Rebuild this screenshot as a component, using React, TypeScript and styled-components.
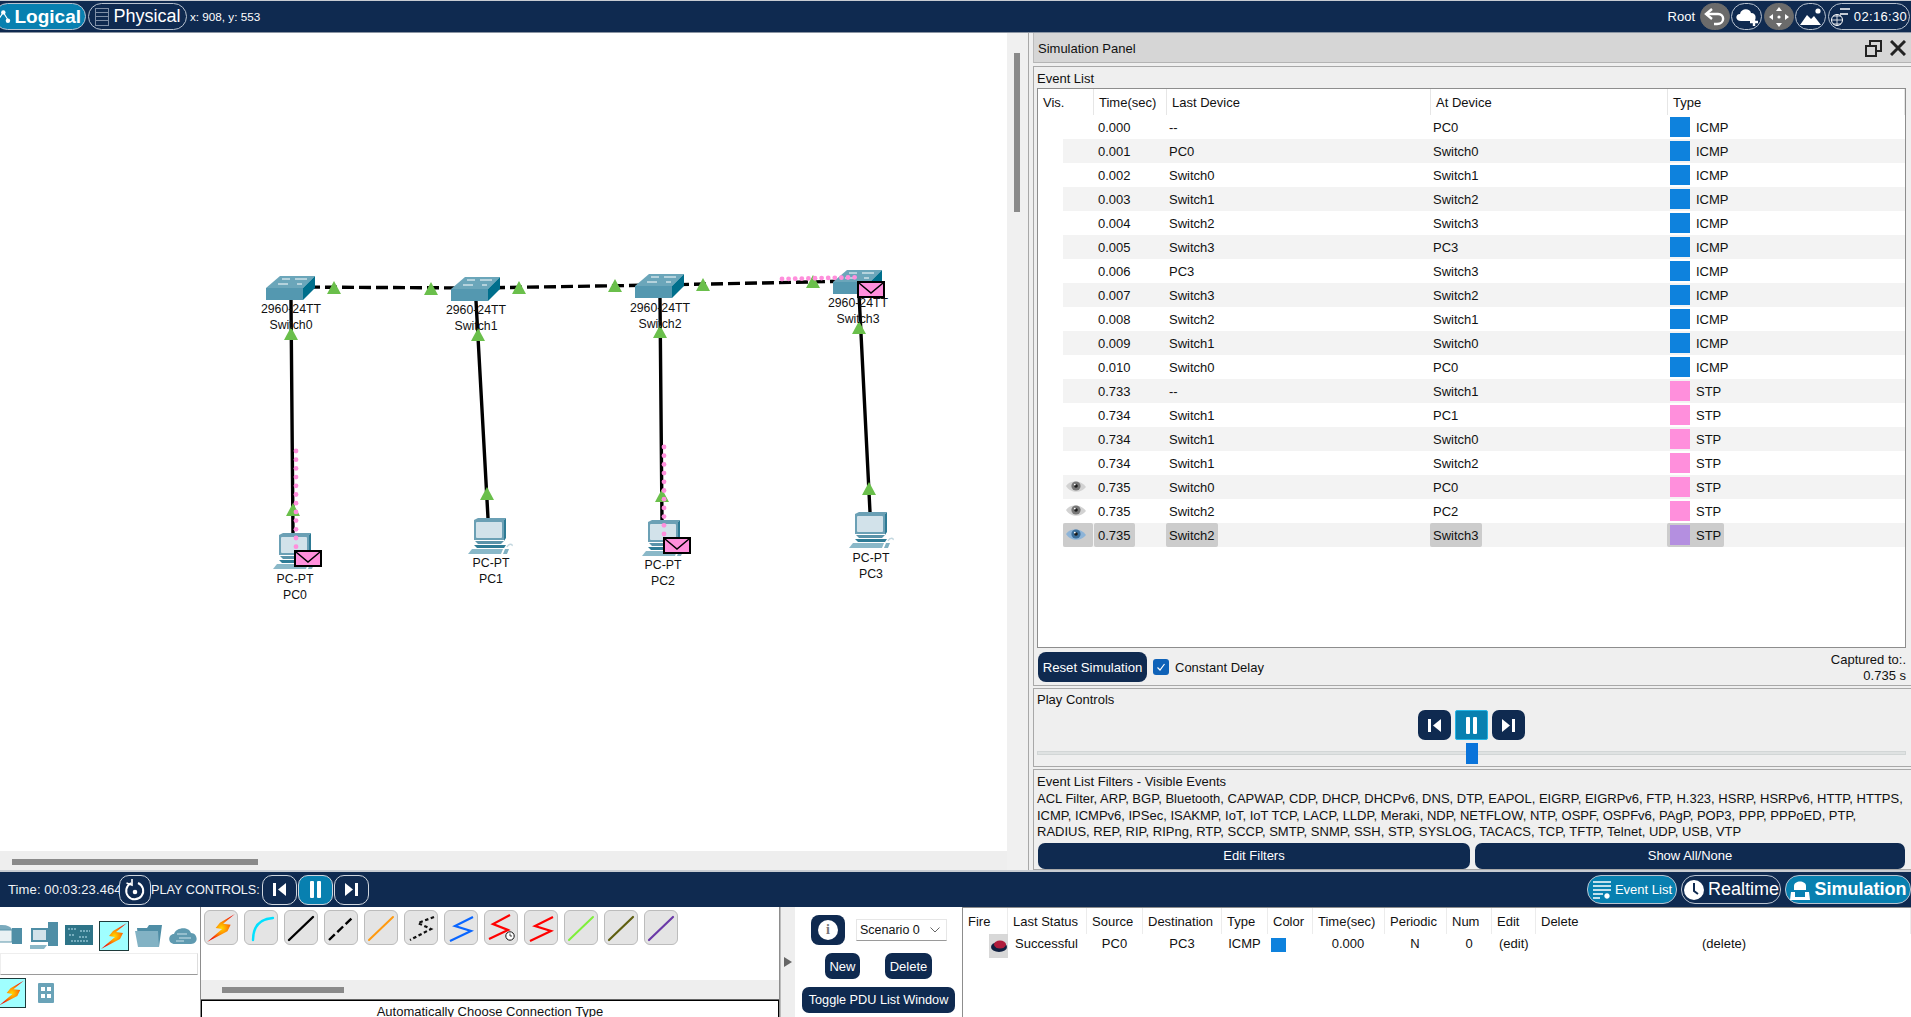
import React from 'react';
import styled, { createGlobalStyle } from 'styled-components';

const NAVY = '#0f2a50';
const BLUE = '#0880b0';

const GlobalStyle = createGlobalStyle`
    html, body { margin: 0; padding: 0; background: #fff; }
    * { box-sizing: border-box; }
    body { font-family: "Liberation Sans", Arial, sans-serif; color: #111; }
`;

const Page = styled.div`
    width: 1911px;
    height: 1017px;
    overflow: hidden;
    display: grid;
    grid-template-rows: 33px 837px 37px 110px;
`;

/* ---------- top bar ---------- */
const TopBar = styled.div`
    background: ${NAVY};
    border-top: 1px solid #c8ccd2;
    border-bottom: 1px solid #8b95a3;
    display: flex;
    align-items: center;
    color: #fff;
    padding-right: 1px;
`;

const Pill = styled.div<{ $active?: boolean; $w: number; $size?: number; $bold?: boolean; $grey?: boolean; $ml?: number }>`
    width: ${p => p.$w}px;
    height: 27px;
    margin-left: ${p => p.$ml ?? 0}px;
    flex: none;
    display: flex;
    align-items: center;
    justify-content: center;
    gap: 3px;
    border-radius: 14px;
    border: 1px solid ${p => (p.$grey ? '#6b6b6b' : '#b9c3d0')};
    background: ${p => (p.$grey ? '#6b6b6b' : p.$active ? BLUE : NAVY)};
    color: #fff;
    font-size: ${p => p.$size ?? 13}px;
    font-weight: ${p => (p.$bold ? 700 : 400)};
    white-space: nowrap;
`;

const LogicalPill = styled(Pill)`
    gap: 1px;
    padding-right: 4px;
`;

const Coords = styled.span`
    font-size: 11.7px;
    margin-left: 3px;
`;

const Spacer = styled.div`
    flex: 1;
`;

const RootLabel = styled.span`
    font-size: 13px;
    margin-right: 5px;
`;

const Clock = styled.span`
    font-size: 13px;
    letter-spacing: 0.35px;
`;

/* ---------- work area ---------- */
const Work = styled.div`
    display: grid;
    grid-template-columns: 1029px 882px;
    min-height: 0;
`;

const Canvas = styled.div`
    position: relative;
    background: #fff;
    overflow: hidden;
    border-right: 1px solid #a8a8a8;
`;

const LinkLayer = styled.svg`
    position: absolute;
    left: 0;
    top: -33px;
    width: 1030px;
    height: 870px;
`;

const VTrack = styled.div`
    position: absolute;
    top: 0;
    right: 0;
    bottom: 0;
    width: 21px;
    background: #f0f0f0;
`;

const VThumb = styled.div`
    position: absolute;
    top: 20px;
    left: 7px;
    width: 6px;
    height: 159px;
    background: #8a8a8a;
`;

const HTrack = styled.div`
    position: absolute;
    left: 0;
    right: 21px;
    bottom: 0;
    height: 19px;
    background: #eeeeee;
`;

const HThumb = styled.div`
    position: absolute;
    left: 12px;
    top: 8px;
    width: 246px;
    height: 6px;
    background: #8a8a8a;
`;

const NodeIcon = styled.svg<{ $x: number; $y: number }>`
    position: absolute;
    left: ${p => p.$x}px;
    top: ${p => p.$y - 33}px;
`;

const NodeLabel = styled.div<{ $cx: number; $y: number }>`
    position: absolute;
    left: ${p => p.$cx - 50}px;
    top: ${p => p.$y - 33 - 8}px;
    width: 100px;
    text-align: center;
    font-size: 12.3px;
    line-height: 16px;
`;

/* ---------- simulation panel ---------- */
const Panel = styled.div`
    background: #efefef;
    display: flex;
    flex-direction: column;
    min-height: 0;
    padding-left: 4px;
    font-size: 13px;
`;

const PanelHead = styled.div`
    height: 30px;
    flex: none;
    margin-bottom: 1px;
    background: #d6d6d6;
    border-bottom: 1px solid #b4b4b4;
    border-left: 1px solid #bbb;
    display: flex;
    align-items: center;
    justify-content: space-between;
    padding: 1px 5px 0 4px;
`;

const HeadIcons = styled.div`
    display: flex;
    align-items: center;
    gap: 8px;
`;

const Section = styled.div<{ $h: number }>`
    height: ${p => p.$h}px;
    flex: none;
    margin-top: 2px;
    border: 1px solid #a8a8a8;
    border-right: none;
    padding: 0 5px 0 3px;
    position: relative;
    background: #efefef;
`;

const SectionTitle = styled.div`
    height: 21px;
    line-height: 23px;
`;

const TableBox = styled.div`
    height: 560px;
    background: #fff;
    border: 1px solid #8d8d8d;
    overflow: hidden;
`;

const HeadRow = styled.div`
    height: 26px;
    display: grid;
    grid-template-columns: 56px 73px 264px 237px 1fr;
    align-items: stretch;
    font-size: 13px;
`;

const HeadCell = styled.div`
    display: flex;
    align-items: center;
    padding-left: 5px;
    border-right: 1px solid #e6e6e6;
`;

const EventRow = styled.div<{ $alt: boolean }>`
    height: 24px;
    display: grid;
    grid-template-columns: 25px 31px 72px 264px 237px 1fr;
    background: linear-gradient(to right, #fff 25px, ${p => (p.$alt ? '#f3f3f3' : '#fff')} 25px);
    align-items: stretch;
`;

const Cell = styled.div<{ $sel?: boolean }>`
    justify-self: start;
    display: flex;
    align-items: center;
    gap: 6px;
    height: 24px;
    padding: 0 3px;
    border-radius: 2px;
    background: ${p => (p.$sel ? '#cccccc' : 'transparent')};
`;

const EyeCell = styled(Cell)`
    justify-self: stretch;
    margin-right: 1px;
`;

const TimeCell = styled(Cell)`
    padding: 0 4px;
`;

const Swatch = styled.span<{ $c: string }>`
    width: 20px;
    height: 20px;
    background: ${p => p.$c};
    flex: none;
`;

const ResetRow = styled.div`
    display: flex;
    align-items: center;
    height: 38px;
    padding-left: 1px;
`;

const NavyButton = styled.div<{ $w?: number; $h?: number; $r?: number; $size?: number }>`
    width: ${p => (p.$w ? `${p.$w}px` : 'auto')};
    height: ${p => p.$h ?? 26}px;
    flex: none;
    border-radius: ${p => p.$r ?? 7}px;
    background: ${NAVY};
    color: #fff;
    display: flex;
    align-items: center;
    justify-content: center;
    font-size: ${p => p.$size ?? 13}px;
    white-space: nowrap;
`;

const Check = styled.div`
    width: 16px;
    height: 16px;
    margin: 0 6px;
    border-radius: 3px;
    background: #0f62b8;
    display: flex;
    align-items: center;
    justify-content: center;
`;

const Captured = styled.div`
    margin-left: auto;
    text-align: right;
    line-height: 16px;
    margin-top: 2px;
`;

const PlayTitle = styled.div`
    line-height: 20px;
    padding-top: 1px;
`;

const PlayButtons = styled.div`
    display: flex;
    justify-content: center;
    gap: 4px;
`;

const SquareButton = styled.div<{ $on?: boolean }>`
    width: 33px;
    height: 30px;
    border-radius: ${p => (p.$on ? 2 : 7)}px;
    background: ${p => (p.$on ? BLUE : NAVY)};
    border: ${p => (p.$on ? '1px solid #25b4e4' : 'none')};
    display: flex;
    align-items: center;
    justify-content: center;
`;

const SliderTrack = styled.div`
    height: 4px;
    margin-top: 11px;
    background: #dfe2e2;
    border: 1px solid #d2d6d6;
    position: relative;
`;

const SliderThumb = styled.div`
    position: absolute;
    left: 428px;
    top: -9px;
    width: 12px;
    height: 21px;
    background: #0a74da;
`;

const FilterTitle = styled.div`
    line-height: 18px;
    padding-top: 3px;
`;

const FilterLine = styled.div`
    line-height: 16.5px;
    white-space: nowrap;
    font-size: 13px;
`;

const FilterButtons = styled.div`
    display: grid;
    grid-template-columns: 432px 430px;
    gap: 5px;
    margin: 2px 0 0 1px;
`;

/* ---------- time bar ---------- */
const TimeBar = styled.div`
    background: ${NAVY};
    border-top: 2px solid #c8ccd2;
    color: #f2f4f7;
    display: flex;
    align-items: center;
    font-size: 13px;
    padding-left: 8px;
`;

const TimeText = styled.span`
    width: 111px;
    flex: none;
    white-space: nowrap;
    letter-spacing: 0.12px;
`;

const RoundBtn = styled.div<{ $w: number; $on?: boolean; $ml?: number }>`
    width: ${p => p.$w}px;
    height: 30px;
    margin-left: ${p => p.$ml ?? 0}px;
    flex: none;
    border: 1px solid #cfd6de;
    border-radius: 10px;
    background: ${p => (p.$on ? BLUE : NAVY)};
    display: flex;
    align-items: center;
    justify-content: center;
`;

const PlayLabel = styled.span`
    width: 111px;
    flex: none;
    font-size: 12.7px;
    white-space: nowrap;
`;

const ModeGroup = styled.div`
    margin-left: auto;
    display: flex;
    gap: 4px;
    color: #fff;
`;

const ModePill = styled(Pill)`
    height: 29px;
`;

/* ---------- bottom dock ---------- */
const Dock = styled.div`
    display: grid;
    grid-template-columns: 201px 579px 20px 162px 1fr;
    background: #fff;
    min-height: 0;
    font-size: 13px;
`;

const DeviceBox = styled.div`
    position: relative;
    overflow: hidden;
    border-right: 1px solid #8d8d8d;
    display: flex;
    flex-direction: column;
`;

const DeviceRow = styled.div`
    height: 46px;
    display: flex;
    align-items: center;
    gap: 6px;
    margin-left: -6px;
    padding-top: 12px;
`;

const SearchBox = styled.div`
    height: 22px;
    width: 198px;
    border: 1px solid #eee;
    border-bottom: 1px solid #9a9a9a;
    border-right: 1px solid #ddd;
`;

const SubRow = styled.div`
    display: flex;
    align-items: center;
    gap: 12px;
    margin-top: 3px;
    margin-left: -3px;
`;

const Hilite = styled.div<{ $w?: number }>`
    width: ${p => p.$w ?? 30}px;
    height: 30px;
    flex: none;
    background: #a0ffff;
    border: 1px solid #1d3b3b;
    display: flex;
    align-items: center;
    justify-content: center;
`;

const ConnBox = styled.div`
    display: flex;
    flex-direction: column;
    border-right: 1px solid #8d8d8d;
    min-height: 0;
`;

const TileRow = styled.div`
    height: 73px;
    flex: none;
    display: flex;
    gap: 6px;
    padding: 3px 0 0 3px;
`;

const Tile = styled.div`
    width: 34px;
    height: 35px;
    background: #e4e4e4;
    border: 1px solid #bcbcbc;
    border-radius: 6px;
    display: flex;
    align-items: center;
    justify-content: center;
    flex: none;
`;

const ConnScroll = styled.div`
    height: 20px;
    flex: none;
    background: #eeeeee;
    position: relative;
    border-bottom: 1px solid #666;
`;

const ConnThumb = styled.div`
    position: absolute;
    left: 21px;
    top: 7px;
    width: 122px;
    height: 6px;
    background: #8a8a8a;
`;

const ConnCaption = styled.div`
    border: 1px solid #000;
    border-bottom: none;
    text-align: center;
    font-size: 13px;
    line-height: 22px;
    height: 30px;
`;

const Strip = styled.div`
    background: #eeeeee;
    border-left: 1px solid #bbb;
    margin-right: 5px;
    display: flex;
    align-items: center;
    padding-left: 3px;
`;

const Arrow = styled.div`
    width: 0;
    height: 0;
    border-left: 8px solid #666;
    border-top: 5px solid transparent;
    border-bottom: 5px solid transparent;
`;

const ScenarioBox = styled.div`
    display: flex;
    flex-direction: column;
    align-items: flex-start;
    padding: 8px 0 0 2px;
`;

const ScenarioTop = styled.div`
    display: flex;
    align-items: center;
    gap: 11px;
    height: 30px;
    margin-left: 9px;
`;

const InfoDot = styled.div`
    width: 20px;
    height: 20px;
    border-radius: 50%;
    background: #fff;
    color: #777;
    font: 700 14px/20px "Liberation Serif", serif;
    text-align: center;
`;

const Select = styled.div`
    width: 91px;
    height: 22px;
    background: #fff;
    border: 1px solid #e6e6e6;
    border-bottom: 1px solid #9a9a9a;
    display: flex;
    align-items: center;
    justify-content: space-between;
    padding: 0 6px 0 3px;
    font-size: 12.5px;
`;

const ScenarioBtns = styled.div`
    display: flex;
    gap: 25px;
    margin: 8px 0 0 23px;
`;

const ToggleWrap = styled.div`
    margin-top: 8px;
    width: 153px;
`;

const PduTable = styled.div`
    border-left: 1px solid #8d8d8d;
    border-top: 1px solid #8d8d8d;
    position: relative;
`;

const PduHead = styled.div`
    height: 26px;
    display: grid;
    grid-template-columns: 45px 79px 56px 79px 46px 45px 72px 62px 45px 44px 1fr;
    font-size: 13px;
`;

const PduHeadCell = styled.div`
    display: flex;
    align-items: center;
    padding-left: 5px;
    border-right: 1px solid #ececec;
`;

const PduRow = styled.div`
    height: 24px;
    display: grid;
    grid-template-columns: 45px 79px 55px 80px 45px 45px 72px 62px 46px 203px 1fr;
    font-size: 13px;
    align-items: center;
    margin-top: -3px;
`;

const PduCell = styled.div<{ $center?: boolean }>`
    text-align: ${p => (p.$center ? 'center' : 'left')};
    padding-left: ${p => (p.$center ? 0 : 7)}px;
`;

const FireBtn = styled.div`
    position: absolute;
    left: 26px;
    top: 26px;
    width: 19px;
    height: 24px;
    background: #d8d8d8;
    display: flex;
    align-items: center;
    justify-content: center;
`;

const ColorDot = styled.div`
    width: 15px;
    height: 14px;
    margin: 3px 0 0 4px;
    background: #0e82dd;
`;

/* ---------- drawings ---------- */
function Bolt({ id, size = 28 }: { id: string; size?: number }) {
    return (
        <svg width={size} height={size} viewBox="0 0 28 28">
            <defs>
                <radialGradient id={id} cx="52%" cy="50%" r="50%">
                    <stop offset="0%" stopColor="#ffd800" />
                    <stop offset="45%" stopColor="#ff8a00" />
                    <stop offset="100%" stopColor="#f01808" />
                </radialGradient>
            </defs>
            <path d="M27 1 L13 9 L9 14 L15 15 L1 27 L20 17 L23 11 L16 10 Z" fill={`url(#${id})`} />
        </svg>
    );
}

function SwitchIcon({ x, y }: { x: number; y: number }) {
    return (
        <NodeIcon $x={x} $y={y} width={49} height={24} viewBox="0 0 49 24">
            <path d="M0 12 L14 0 H49 L37 12 Z" fill="#6ba6ba" />
            <path d="M0 12 H37 V24 H0 Z" fill="#5498b0" />
            <path d="M37 12 L49 0 V12 L37 24 Z" fill="#006f8c" />
            <path d="M16 3 H24 M29 3 H41 M12 8 H22 M31 8 H36" stroke="#fff" strokeWidth="1" fill="none" />
        </NodeIcon>
    );
}

function PcIcon({ x, y }: { x: number; y: number }) {
    return (
        <NodeIcon $x={x} $y={y} width={45} height={36} viewBox="0 0 45 36">
            <path d="M6 2 L10 0 H38 L36 2 V22 H6 Z" fill="#6ba0b5" />
            <path d="M36 2 L38 0 V20 L36 23 Z" fill="#2d7a94" />
            <rect x="8" y="4" width="26" height="16" rx="1" fill="#d2e2ea" />
            <path d="M7 23 H36 L33 26 H10 Z" fill="#5a93a9" />
            <path d="M6 27 H38 L36 30 H9 Z" fill="#2f7c96" />
            <path d="M4 31 H35 L33 36 H0 Z" fill="#8ab8c8" />
            <path d="M37 31 H41 L39 36 H35 Z" fill="#7fb0c2" />
            <path d="M39 29 C41 25 45 26 44 28" stroke="#c4d8e0" strokeWidth="1.4" fill="none" />
        </NodeIcon>
    );
}

function Envelope({ x, y }: { x: number; y: number }) {
    return (
        <NodeIcon $x={x} $y={y} width={28} height={17} viewBox="0 0 28 17">
            <rect x="1" y="1" width="26" height="15" fill="#ff8fdc" stroke="#000" strokeWidth="2" />
            <path d="M2 2 L14 12 L26 2" fill="none" stroke="#000" strokeWidth="1.5" />
        </NodeIcon>
    );
}

function Eye({ blue }: { blue?: boolean }) {
    const c = blue ? '#8db4d8' : '#d2d2d2';
    const d = blue ? '#3c6f9c' : '#777777';
    return (
        <svg width="20" height="14" viewBox="0 0 20 14">
            <path d="M0 6 C4 0 15 0 20 7 C15 14 4 13 0 6 Z" fill={c} />
            <circle cx="10" cy="6" r="4.6" fill={d} />
            <circle cx="10" cy="6" r="1.8" fill="#1a1a1a" />
            <circle cx="8.8" cy="4.6" r="0.9" fill="#fff" />
        </svg>
    );
}

const Prev = () => (
    <svg width="15" height="15" viewBox="0 0 15 15" fill="#fff"><rect x="1" y="1" width="3" height="13" /><path d="M14 1 V14 L6 7.5 Z" /></svg>
);
const Next = () => (
    <svg width="15" height="15" viewBox="0 0 15 15" fill="#fff"><rect x="11" y="1" width="3" height="13" /><path d="M1 1 V14 L9 7.5 Z" /></svg>
);
const Pause = () => (
    <svg width="15" height="17" viewBox="0 0 15 17" fill="#fff"><rect x="2" y="0" width="4" height="17" rx="1" /><rect x="9" y="0" width="4" height="17" rx="1" /></svg>
);

/* ---------- data ---------- */
const ICMP = '#0e82dd';
const STP = '#ff8fdc';
const events: [string, string, string, string][] = [
    ['0.000', '--', 'PC0', ICMP],
    ['0.001', 'PC0', 'Switch0', ICMP],
    ['0.002', 'Switch0', 'Switch1', ICMP],
    ['0.003', 'Switch1', 'Switch2', ICMP],
    ['0.004', 'Switch2', 'Switch3', ICMP],
    ['0.005', 'Switch3', 'PC3', ICMP],
    ['0.006', 'PC3', 'Switch3', ICMP],
    ['0.007', 'Switch3', 'Switch2', ICMP],
    ['0.008', 'Switch2', 'Switch1', ICMP],
    ['0.009', 'Switch1', 'Switch0', ICMP],
    ['0.010', 'Switch0', 'PC0', ICMP],
    ['0.733', '--', 'Switch1', STP],
    ['0.734', 'Switch1', 'PC1', STP],
    ['0.734', 'Switch1', 'Switch0', STP],
    ['0.734', 'Switch1', 'Switch2', STP],
    ['0.735', 'Switch0', 'PC0', STP],
    ['0.735', 'Switch2', 'PC2', STP],
    ['0.735', 'Switch2', 'Switch3', '#b48fe0'],
];

const switches = [
    { x: 266, y: 276, cx: 291, ly: 309, name: 'Switch0' },
    { x: 451, y: 277, cx: 476, ly: 310, name: 'Switch1' },
    { x: 635, y: 274, cx: 660, ly: 308, name: 'Switch2' },
    { x: 833, y: 270, cx: 858, ly: 303, name: 'Switch3' },
];

const pcs = [
    { x: 273, y: 533, cx: 295, ly: 579, name: 'PC0' },
    { x: 468, y: 518, cx: 491, ly: 563, name: 'PC1' },
    { x: 642, y: 520, cx: 663, ly: 565, name: 'PC2' },
    { x: 849, y: 512, cx: 871, ly: 558, name: 'PC3' },
];

const triangles = [
    [334, 281], [431, 282], [519, 281], [615, 279], [703, 278], [813, 275],
    [291, 327], [478, 328], [660, 325], [859, 321],
    [293, 503], [487, 487], [662, 489], [869, 482],
];

const dots: [number, number][] = [
    ...Array.from({ length: 12 }, (_, i): [number, number] => [296, 451 + i * 8.7]),
    ...Array.from({ length: 11 }, (_, i): [number, number] => [664, 447 + i * 8.7]),
    ...Array.from({ length: 12 }, (_, i): [number, number] => [782 + i * 6.6, 279 - i * 0.15]),
];

const tiles: React.ReactNode[] = [
    <Bolt id="tile-bolt" size={30} />,
    <svg width="28" height="28" viewBox="0 0 28 28"><path d="M6 26 C6 12 13 5 26 4" fill="none" stroke="#00e1ff" strokeWidth="2.4" strokeLinecap="round" /></svg>,
    <svg width="28" height="28" viewBox="0 0 28 28"><path d="M2 26 L26 3" stroke="#000" strokeWidth="2.4" strokeLinecap="round" /></svg>,
    <svg width="28" height="28" viewBox="0 0 28 28"><path d="M2 26 L26 3" stroke="#000" strokeWidth="2.4" strokeDasharray="8 3.5" /></svg>,
    <svg width="28" height="28" viewBox="0 0 28 28"><path d="M2 26 L26 3" stroke="#ff9a10" strokeWidth="2" strokeLinecap="round" /></svg>,
    <svg width="28" height="28" viewBox="0 0 28 28"><path d="M27 3 L11 9 L24 15 L3 26" fill="none" stroke="#111" strokeWidth="2.2" strokeDasharray="3.5 2.5" /></svg>,
    <svg width="28" height="28" viewBox="0 0 28 28"><path d="M26 3 L8 12 L24 17 L3 27" fill="none" stroke="#0a66ff" strokeWidth="2.2" /></svg>,
    <svg width="30" height="30" viewBox="0 0 30 30"><path d="M24 2 L7 11 L22 17 L3 26" fill="none" stroke="#ff0000" strokeWidth="2.2" /><circle cx="24" cy="23" r="4.2" fill="#fff" stroke="#111" strokeWidth="1" /><path d="M24 20.5 V23 H26" stroke="#111" strokeWidth="0.8" fill="none" /></svg>,
    <svg width="28" height="28" viewBox="0 0 28 28"><path d="M26 3 L8 12 L24 17 L3 27" fill="none" stroke="#ff0000" strokeWidth="2.2" /></svg>,
    <svg width="28" height="28" viewBox="0 0 28 28"><path d="M2 26 L26 3" stroke="#7fef3a" strokeWidth="2" strokeLinecap="round" /></svg>,
    <svg width="28" height="28" viewBox="0 0 28 28"><path d="M2 26 L26 3" stroke="#5f5f10" strokeWidth="2.2" strokeLinecap="round" /></svg>,
    <svg width="28" height="28" viewBox="0 0 28 28"><path d="M2 26 L26 3" stroke="#6b3aa8" strokeWidth="2.2" strokeLinecap="round" /></svg>,
];

const filterLines = [
    'ACL Filter, ARP, BGP, Bluetooth, CAPWAP, CDP, DHCP, DHCPv6, DNS, DTP, EAPOL, EIGRP, EIGRPv6, FTP, H.323, HSRP, HSRPv6, HTTP, HTTPS,',
    'ICMP, ICMPv6, IPSec, ISAKMP, IoT, IoT TCP, LACP, LLDP, Meraki, NDP, NETFLOW, NTP, OSPF, OSPFv6, PAgP, POP3, PPP, PPPoED, PTP,',
    'RADIUS, REP, RIP, RIPng, RTP, SCCP, SMTP, SNMP, SSH, STP, SYSLOG, TACACS, TCP, TFTP, Telnet, UDP, USB, VTP',
];

function App() {
    return (
        <Page>
            <GlobalStyle />
            <TopBar>
                <LogicalPill $active $w={92} $size={19} $bold $ml={-6}>
                    <svg width="20" height="20" viewBox="0 0 20 20"><path d="M3 14 L9 5 L14 13" stroke="#fff" strokeWidth="1.2" fill="none" /><circle cx="9" cy="5" r="2.4" fill="#fff" /><circle cx="14" cy="14" r="2.4" fill="#fff" /><circle cx="3" cy="15" r="2.2" fill="#fff" /></svg>
                    Logical
                </LogicalPill>
                <Pill $w={99} $size={18} $ml={2}>
                    <svg width="16" height="20" viewBox="0 0 16 20" fill="none" stroke="#7f8fa6"><rect x="1.5" y="1.5" width="13" height="17" /><path d="M1.5 5.5 H14.5 M1.5 9.5 H14.5 M1.5 13.5 H14.5" /></svg>
                    Physical
                </Pill>
                <Coords>x: 908, y: 553</Coords>
                <Spacer />
                <RootLabel>Root</RootLabel>
                <Pill $grey $w={30}>
                    <svg width="24" height="20" viewBox="0 0 24 20" fill="none" stroke="#fff" strokeWidth="2.4"><path d="M9 2 L3 7 L9 12" /><path d="M3 7 H15 C22 7 22 17 14 17 H11" /></svg>
                </Pill>
                <Pill $w={31} $ml={1}>
                    <svg width="24" height="20" viewBox="0 0 24 20"><path d="M6 14 C0 14 0 7 5 7 C6 1 15 1 16 6 C22 6 22 14 17 14 Z" fill="#fff" /><path d="M19 11 V19 M15 15 H23" stroke="#fff" strokeWidth="2.4" /></svg>
                </Pill>
                <Pill $grey $w={30} $ml={2}>
                    <svg width="22" height="22" viewBox="0 0 22 22" fill="#fff"><path d="M11 1 L14 5 H8 Z M11 21 L8 17 H14 Z M1 11 L5 8 V14 Z M21 11 L17 14 V8 Z" /><circle cx="11" cy="11" r="1.6" /></svg>
                </Pill>
                <Pill $w={31} $ml={1}>
                    <svg width="24" height="20" viewBox="0 0 24 20" fill="#fff"><path d="M1 18 L8 8 L12 12 L15 9 L22 18 Z" /><circle cx="19" cy="4" r="2.6" /></svg>
                </Pill>
                <Pill $w={82} $ml={2}>
                    <svg width="20" height="22" viewBox="0 0 20 22" fill="none" stroke="#fff"><circle cx="6" cy="14" r="5.5" /><path d="M0.5 14 H11.5 M6 8.5 V19.5 M2 10 H10 M2 18 H10" strokeWidth="0.8" /><path d="M9 3 H19 M9 8 H17" strokeWidth="1.6" /></svg>
                    <Clock>02:16:30</Clock>
                </Pill>
            </TopBar>

            <Work>
                <Canvas>
                    <LinkLayer viewBox="0 0 1030 870">
                        <g stroke="#000" strokeWidth="3.4" fill="none">
                            <path d="M291 287 L476 288 M476 288 L660 285 M660 285 L858 281" strokeDasharray="12 5" />
                            <path d="M291 300 L293 535 M476 301 L488 518 M660 298 L662 522 M859 294 L870 512" />
                        </g>
                        {triangles.map(([x, y], i) => (
                            <path key={i} d={`M${x} ${y} L${x + 7} ${y + 13} H${x - 7} Z`} fill="#6abf4b" />
                        ))}
                    </LinkLayer>
                    {switches.map(s => (
                        <React.Fragment key={s.name}>
                            <SwitchIcon x={s.x} y={s.y} />
                            <NodeLabel $cx={s.cx} $y={s.ly}>2960-24TT<br />{s.name}</NodeLabel>
                        </React.Fragment>
                    ))}
                    {pcs.map(p => (
                        <React.Fragment key={p.name}>
                            <PcIcon x={p.x} y={p.y} />
                            <NodeLabel $cx={p.cx} $y={p.ly}>PC-PT<br />{p.name}</NodeLabel>
                        </React.Fragment>
                    ))}
                    <LinkLayer viewBox="0 0 1030 870">
                        {dots.map(([x, y], i) => (
                            <circle key={i} cx={x} cy={y} r="2.4" fill="#ff8fdc" />
                        ))}
                    </LinkLayer>
                    <Envelope x={294} y={550} />
                    <Envelope x={663} y={537} />
                    <Envelope x={857} y={281} />
                    <VTrack><VThumb /></VTrack>
                    <HTrack><HThumb /></HTrack>
                </Canvas>

                <Panel>
                    <PanelHead>
                        <span>Simulation Panel</span>
                        <HeadIcons>
                            <svg width="17" height="17" viewBox="0 0 17 17" fill="none" stroke="#222" strokeWidth="2"><rect x="1" y="6" width="10" height="10" /><path d="M5 5 V1 H16 V11 H12" /></svg>
                            <svg width="16" height="16" viewBox="0 0 16 16" stroke="#222" strokeWidth="3"><path d="M1 1 L15 15 M15 1 L1 15" /></svg>
                        </HeadIcons>
                    </PanelHead>
                    <Section $h={620}>
                        <SectionTitle>Event List</SectionTitle>
                        <TableBox>
                            <HeadRow>
                                <HeadCell>Vis.</HeadCell>
                                <HeadCell>Time(sec)</HeadCell>
                                <HeadCell>Last Device</HeadCell>
                                <HeadCell>At Device</HeadCell>
                                <HeadCell>Type</HeadCell>
                            </HeadRow>
                            {events.map(([t, from, at, c], i) => {
                                const last = i === events.length - 1;
                                return (
                                    <EventRow key={i} $alt={i % 2 === 1}>
                                        <span />
                                        <EyeCell $sel={last}>{i >= 15 && <Eye blue={last} />}</EyeCell>
                                        <TimeCell $sel={last}>{t}</TimeCell>
                                        <Cell $sel={last}>{from}</Cell>
                                        <Cell $sel={last}>{at}</Cell>
                                        <Cell $sel={last}>
                                            <Swatch $c={c} />
                                            {c === ICMP ? 'ICMP' : 'STP'}
                                        </Cell>
                                    </EventRow>
                                );
                            })}
                        </TableBox>
                        <ResetRow>
                            <NavyButton $w={109} $h={30} $r={8} $size={13.2}>Reset Simulation</NavyButton>
                            <Check>
                                <svg width="10" height="10" viewBox="0 0 10 10" fill="none" stroke="#fff" strokeWidth="1.2"><path d="M1.5 5.5 L4 8 L8.5 2" /></svg>
                            </Check>
                            <span>Constant Delay</span>
                            <Captured>Captured to:.<br />0.735 s</Captured>
                        </ResetRow>
                    </Section>
                    <Section $h={79}>
                        <PlayTitle>Play Controls</PlayTitle>
                        <PlayButtons>
                            <SquareButton><Prev /></SquareButton>
                            <SquareButton $on><Pause /></SquareButton>
                            <SquareButton><Next /></SquareButton>
                        </PlayButtons>
                        <SliderTrack><SliderThumb /></SliderTrack>
                    </Section>
                    <Section $h={101}>
                        <FilterTitle>Event List Filters - Visible Events</FilterTitle>
                        {filterLines.map(line => <FilterLine key={line}>{line}</FilterLine>)}
                        <FilterButtons>
                            <NavyButton $r={7}>Edit Filters</NavyButton>
                            <NavyButton $r={7}>Show All/None</NavyButton>
                        </FilterButtons>
                    </Section>
                </Panel>
            </Work>

            <TimeBar>
                <TimeText>Time: 00:03:23.464</TimeText>
                <RoundBtn $w={32}>
                    <svg width="22" height="24" viewBox="0 0 22 24" fill="none" stroke="#fff" strokeWidth="2"><path d="M14 5 A8.5 8.5 0 1 1 7 5.2" /><path d="M8 1 L8 7 L2.5 5" strokeWidth="1.6" /><circle cx="11" cy="14" r="1.3" fill="#fff" /></svg>
                </RoundBtn>
                <PlayLabel>PLAY CONTROLS:</PlayLabel>
                <RoundBtn $w={35}><Prev /></RoundBtn>
                <RoundBtn $w={35} $on $ml={1}><Pause /></RoundBtn>
                <RoundBtn $w={35} $ml={1}><Next /></RoundBtn>
                <ModeGroup>
                    <ModePill $active $w={90}>
                        <svg width="20" height="22" viewBox="0 0 20 22" stroke="#fff" strokeWidth="1.6"><path d="M1 3 H19 M1 7 H19 M1 11 H19 M1 15 H11 M1 19 H8" /><circle cx="15" cy="17" r="2.4" fill="#fff" strokeWidth="0.6" /></svg>
                        Event List
                    </ModePill>
                    <ModePill $w={100} $size={18}>
                        <svg width="22" height="22" viewBox="0 0 22 22"><circle cx="11" cy="11" r="10" fill="#fff" /><path d="M11 4 V12 L15 15" stroke={NAVY} strokeWidth="2" fill="none" /></svg>
                        Realtime
                    </ModePill>
                    <ModePill $active $w={126} $size={18} $bold>
                        <svg width="22" height="24" viewBox="0 0 22 24" fill="#fff"><path d="M5 8 C5 2 17 2 17 8 V12 H5 Z" /><path d="M2 14 H20 L21 22 H1 Z" /><rect x="6" y="13" width="10" height="6" fill={BLUE} /></svg>
                        Simulation
                    </ModePill>
                </ModeGroup>
            </TimeBar>

            <Dock>
                <DeviceBox>
                    <DeviceRow>
                        <svg width="30" height="30" viewBox="0 0 30 30"><ellipse cx="8" cy="9" rx="10" ry="5" fill="#7aaabd" /><rect x="-2" y="9" width="20" height="12" fill="#e9f1f4" stroke="#5d96ab" /><rect x="18" y="7" width="10" height="16" fill="#4f8ea6" /></svg>
                        <svg width="29" height="30" viewBox="0 0 29 30"><rect x="18" y="1" width="10" height="24" fill="#4f8ea6" /><rect x="2" y="8" width="15" height="12" fill="#d2e2ea" stroke="#4f8ea6" strokeWidth="2" /><path d="M0 24 H17 L14 28 H0 Z" fill="#8ab8c8" /></svg>
                        <svg width="28" height="22" viewBox="0 0 28 22"><rect width="28" height="20" fill="#2e7488" /><path d="M3 4 H12 M15 6 H25 M4 10 H9 M14 12 H22 M6 16 H24" stroke="#8fc0cf" strokeWidth="1.5" strokeDasharray="2 1" /></svg>
                        <Hilite $w={30}><Bolt id="dev-bolt" /></Hilite>
                        <svg width="28" height="24" viewBox="0 0 28 24"><path d="M2 4 H12 L14 1 H27 L24 23 H4 Z" fill="#4f8ea6" /><path d="M0 7 H23 L24 23 H3 Z" fill="#82b2c4" /></svg>
                        <svg width="28" height="20" viewBox="0 0 28 20"><path d="M6 18 C-2 18 -1 8 5 8 C7 1 20 0 22 7 C29 7 30 18 22 18 Z" fill="#5f9ab0" /><path d="M8 8 H18 M10 12 H22 M7 15 H15" stroke="#a8cad6" strokeWidth="1.3" /></svg>
                    </DeviceRow>
                    <SearchBox />
                    <SubRow>
                        <Hilite $w={29}><Bolt id="sub-bolt" /></Hilite>
                        <svg width="16" height="20" viewBox="0 0 16 20"><rect width="16" height="20" rx="1" fill="#6aa3b8" /><rect x="3" y="4" width="4" height="4" fill="#fff" /><rect x="9" y="4" width="4" height="4" fill="#fff" /><rect x="3" y="11" width="4" height="4" fill="#fff" /><rect x="9" y="11" width="4" height="4" fill="#fff" /></svg>
                    </SubRow>
                </DeviceBox>
                <ConnBox>
                    <TileRow>
                        {tiles.map((t, i) => <Tile key={i}>{t}</Tile>)}
                    </TileRow>
                    <ConnScroll><ConnThumb /></ConnScroll>
                    <ConnCaption>Automatically Choose Connection Type</ConnCaption>
                </ConnBox>
                <Strip><Arrow /></Strip>
                <ScenarioBox>
                    <ScenarioTop>
                        <NavyButton $w={34} $h={30} $r={8}><InfoDot>i</InfoDot></NavyButton>
                        <Select>
                            Scenario 0
                            <svg width="10" height="6" viewBox="0 0 10 6" fill="none" stroke="#666"><path d="M0.5 0.5 L5 5 L9.5 0.5" /></svg>
                        </Select>
                    </ScenarioTop>
                    <ScenarioBtns>
                        <NavyButton $w={35} $size={13}>New</NavyButton>
                        <NavyButton $w={47} $size={13}>Delete</NavyButton>
                    </ScenarioBtns>
                    <ToggleWrap>
                        <NavyButton $w={153} $size={12.7}>Toggle PDU List Window</NavyButton>
                    </ToggleWrap>
                </ScenarioBox>
                <PduTable>
                    <PduHead>
                        {['Fire', 'Last Status', 'Source', 'Destination', 'Type', 'Color', 'Time(sec)', 'Periodic', 'Num', 'Edit', 'Delete'].map(h => (
                            <PduHeadCell key={h}>{h}</PduHeadCell>
                        ))}
                    </PduHead>
                    <FireBtn>
                        <svg width="18" height="14" viewBox="0 0 18 14"><ellipse cx="9" cy="8" rx="8" ry="5" fill="#102040" /><ellipse cx="10" cy="5.5" rx="6" ry="4" fill="#b01c3c" /></svg>
                    </FireBtn>
                    <PduRow>
                        <span />
                        <PduCell>Successful</PduCell>
                        <PduCell $center>PC0</PduCell>
                        <PduCell $center>PC3</PduCell>
                        <PduCell $center>ICMP</PduCell>
                        <ColorDot />
                        <PduCell $center>0.000</PduCell>
                        <PduCell $center>N</PduCell>
                        <PduCell $center>0</PduCell>
                        <PduCell>(edit)</PduCell>
                        <PduCell>(delete)</PduCell>
                    </PduRow>
                </PduTable>
            </Dock>
        </Page>
    );
}

export default App;
